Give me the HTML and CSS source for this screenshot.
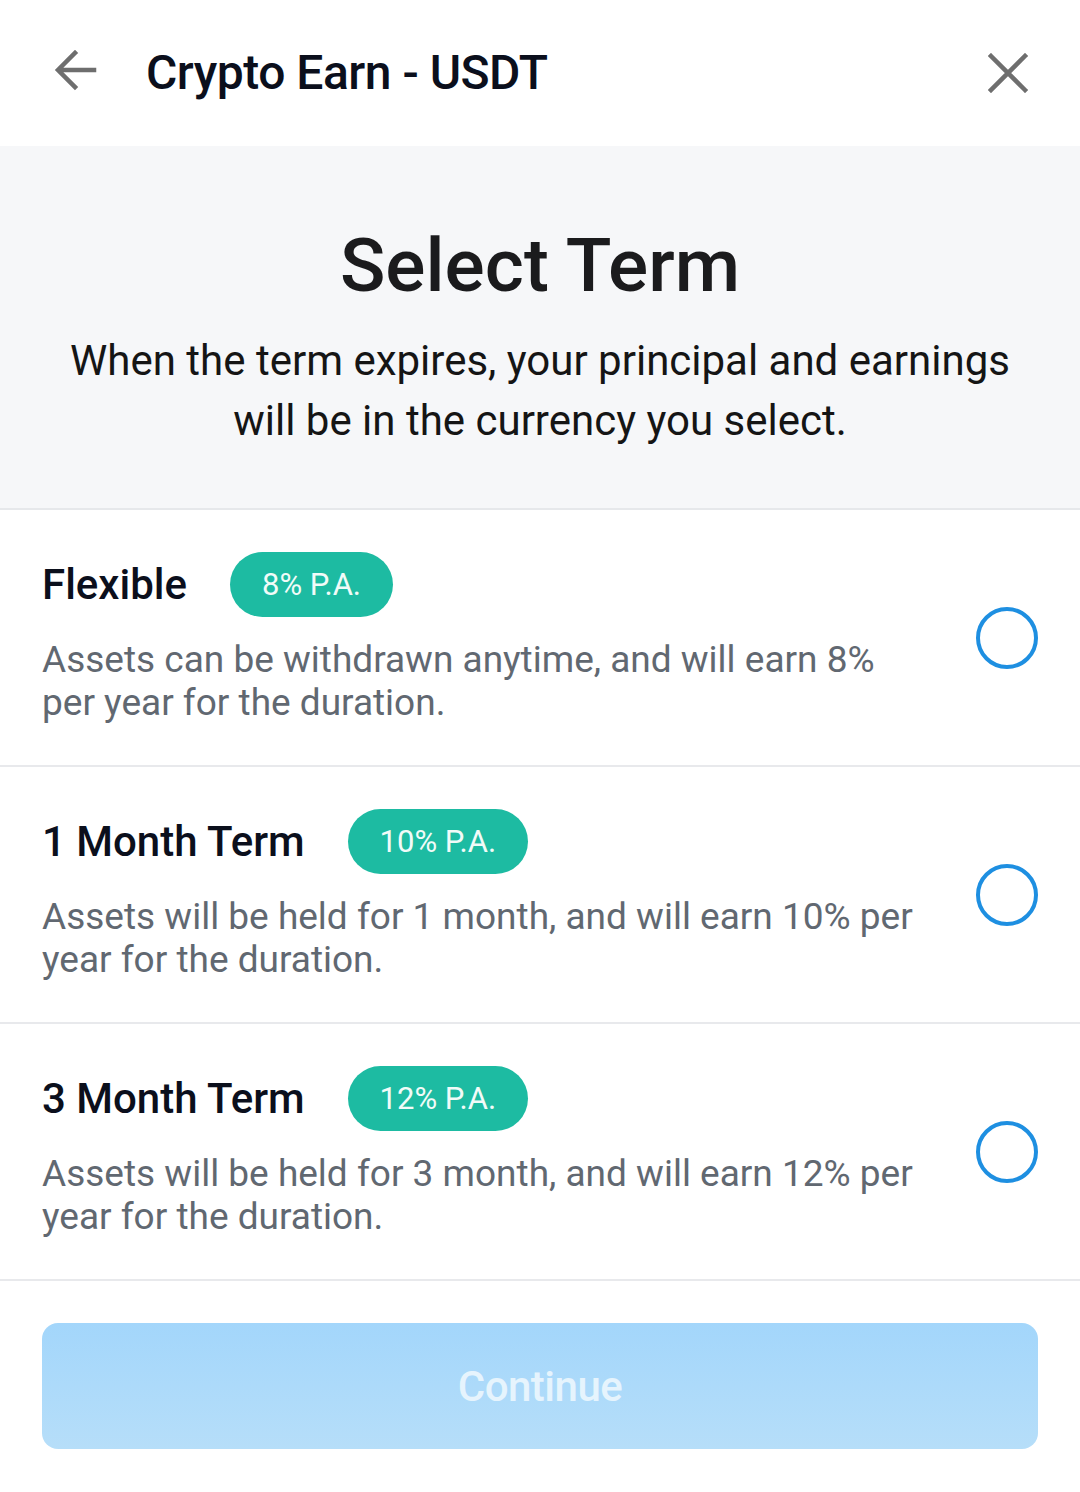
FILE: index.html
```html
<!DOCTYPE html>
<html lang="en">
<head>
<meta charset="utf-8">
<title>Crypto Earn - USDT</title>
<link rel="stylesheet" href="styles.css">
</head>
<body>
<div class="app">
  <header class="topbar">
    <button class="icon-btn back" aria-label="Back">
      <svg width="48" height="48" viewBox="0 0 48 48"><path d="M44 21H10M25 4 8 21l17 17" fill="none" stroke="#6e6e6e" stroke-width="4.5" stroke-linecap="square"/></svg>
    </button>
    <h1 class="topbar-title">Crypto Earn - USDT</h1>
    <button class="icon-btn close" aria-label="Close">
      <svg width="40" height="40" viewBox="0 0 40 40"><path d="M3 3 37 37M37 3 3 37" fill="none" stroke="#6e6e6e" stroke-width="4.5" stroke-linecap="square"/></svg>
    </button>
  </header>

  <section class="intro">
    <h2 class="intro-title">Select Term</h2>
    <p class="intro-text">When the term expires, your principal and earnings will be in the currency you select.</p>
  </section>

  <ul class="terms">
    <li class="term">
      <div class="term-body">
        <div class="term-head">
          <span class="term-name">Flexible</span>
          <span class="badge">8% P.A.</span>
        </div>
        <p class="term-desc">Assets can be withdrawn anytime, and will earn 8% per year for the duration.</p>
      </div>
      <span class="radio"></span>
    </li>
    <li class="term">
      <div class="term-body">
        <div class="term-head">
          <span class="term-name">1 Month Term</span>
          <span class="badge">10% P.A.</span>
        </div>
        <p class="term-desc">Assets will be held for 1 month, and will earn 10% per year for the duration.</p>
      </div>
      <span class="radio"></span>
    </li>
    <li class="term">
      <div class="term-body">
        <div class="term-head">
          <span class="term-name">3 Month Term</span>
          <span class="badge">12% P.A.</span>
        </div>
        <p class="term-desc">Assets will be held for 3 month, and will earn 12% per year for the duration.</p>
      </div>
      <span class="radio"></span>
    </li>
  </ul>

  <div class="footer">
    <button class="continue" disabled>Continue</button>
  </div>
</div>
</body>
</html>
```

FILE: styles.css
```css
* { box-sizing: border-box; }
html, body { margin: 0; padding: 0; background: #ffffff; }
body {
  font-family: Roboto, "Noto Sans", "Liberation Sans", sans-serif;
  width: 1080px;
  height: 1492px;
  overflow: hidden;
}
.app { display: flex; flex-direction: column; }

.topbar {
  height: 146px;
  display: flex;
  align-items: center;
  padding: 0 52px 0 50px;
}
.icon-btn {
  background: none;
  border: 0;
  padding: 0;
  display: flex;
  align-items: center;
  justify-content: center;
}
.back { width: 48px; height: 48px; }
.topbar-title {
  margin: 0 0 0 48px;
  flex: 1;
  font-size: 48px;
  font-weight: 500;
  color: #0b0f1c;
  letter-spacing: -0.5px;
  line-height: 1;
}
.close { width: 40px; height: 40px; }

.intro {
  background: #f6f7f9;
  height: 364px;
  border-bottom: 2px solid #e6e8eb;
  display: flex;
  flex-direction: column;
  align-items: center;
  padding-top: 79px;
}
.intro-title {
  margin: 0;
  font-size: 75px;
  font-weight: 500;
  color: #1b1b1d;
  line-height: 80px;
}
.intro-text {
  margin: 26px 0 0;
  max-width: 980px;
  text-align: center;
  font-size: 42px;
  line-height: 60px;
  color: #151515;
}

.terms { list-style: none; margin: 0; padding: 0; }
.term {
  height: 257px;
  display: flex;
  align-items: center;
  padding: 0 42px;
  border-bottom: 2px solid #e8e9ec;
}
.term-body { width: 880px; flex: none; }
.term-head { display: flex; align-items: center; height: 65px; }
.term-name {
  font-size: 42px;
  font-weight: 500;
  color: #0b0f1c;
}
.badge {
  margin-left: 43px;
  height: 65px;
  padding: 0 32px;
  border-radius: 33px;
  background: #1dbba2;
  color: #f1fbf8;
  font-size: 31px;
  display: flex;
  align-items: center;
}
.term-desc {
  margin: 21px 0 0;
  font-size: 37px;
  line-height: 43px;
  color: #616871;
}
.radio {
  margin-left: auto;
  width: 62px;
  height: 62px;
  border-radius: 50%;
  border: 4px solid #1e8fe1;
  flex: none;
}

.footer { padding: 42px 42px 0; }
.continue {
  width: 100%;
  height: 126px;
  border: 0;
  border-radius: 16px;
  background: linear-gradient(180deg, #a3d6fb 0%, #b6def9 100%);
  color: #e6f4fd;
  font-family: Roboto, "Noto Sans", sans-serif;
  font-size: 42px;
  font-weight: 500;
  letter-spacing: -0.5px;
}
```
